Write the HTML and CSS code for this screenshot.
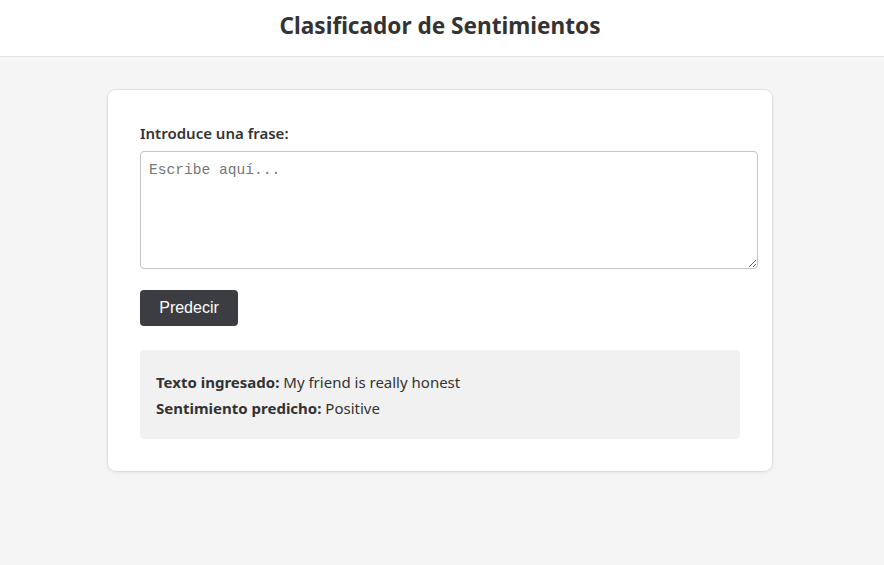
FILE: index.html
```html
<!DOCTYPE html>
<html lang="es">
<head>
<meta charset="utf-8">
<title>Clasificador de Sentimientos</title>
<link rel="stylesheet" href="styles.css">
</head>
<body>
<header class="topbar">
  <h1 class="title">Clasificador de Sentimientos</h1>
</header>
<main class="main">
  <section class="card">
    <form class="form">
      <label class="label" for="frase">Introduce una frase:</label>
      <textarea id="frase" class="input" placeholder="Escribe aquí..."></textarea>
      <button type="button" class="btn">Predecir</button>
    </form>
    <div class="result">
      <p class="line"><strong>Texto ingresado:</strong> My friend is really honest</p>
      <p class="line"><strong>Sentimiento predicho:</strong> Positive</p>
    </div>
  </section>
</main>
</body>
</html>
```
FILE: styles.css
```css
* { box-sizing: content-box; }
html, body { margin: 0; padding: 0; }
body {
  background: #f5f5f5;
  font-family: "Noto Sans", "Open Sans", sans-serif;
  color: #333;
  height: 565px;
}
.topbar {
  background: #fff;
  height: 56px;
  border-bottom: 1px solid #e2e2e2;
  display: flex;
  align-items: center;
  justify-content: center;
  padding-right: 4px;
}
.title {
  margin: 0;
  font-size: 22.6px;
  font-weight: 700;
  color: #333;
  line-height: 1;
  padding-bottom: 4px;
}
.main {
  display: flex;
  justify-content: center;
  padding-top: 33px;
  padding-right: 4px;
}
.card {
  width: 600px;
  background: #fff;
  border-radius: 8px;
  padding: 32px;
  box-shadow: 0 0 0 1px rgba(0,0,0,0.06), 0 1px 4px rgba(0,0,0,0.08);
}
.form { display: flex; flex-direction: column; align-items: flex-start; }
.label {
  font-size: 15px;
  font-weight: 600;
  line-height: 22px;
  margin-bottom: 7px;
}
.input {
  width: 600px;
  height: 100px;
  padding: 8px;
  border: 1px solid #c6c6c6;
  border-radius: 4px;
  font-family: "Liberation Mono", monospace;
  font-size: 14.6px;
  line-height: 20px;
  color: #333;
  resize: vertical;
  margin: 0 0 21px 0;
}
.input::placeholder { color: #777; }
.btn {
  background: #3b3d42;
  color: #fff;
  border: none;
  border-radius: 4px;
  height: 36px;
  width: 98px;
  padding: 0;
  font-family: "Liberation Sans", Arial, sans-serif;
  font-size: 16px;
}
.result {
  margin-top: 24px;
  background: #f1f1f1;
  border-radius: 4px;
  padding: 19px 16px 18px;
}
.line {
  margin: 0;
  font-size: 15px;
  line-height: 26px;
}
.line strong { font-weight: 700; }
```
